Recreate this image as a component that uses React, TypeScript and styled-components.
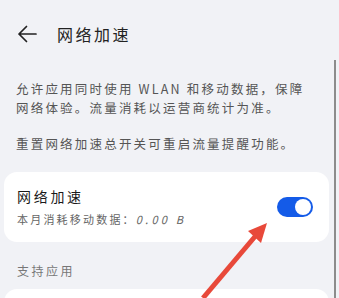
import React from "react";
import styled, { createGlobalStyle } from "styled-components";

const GlobalStyle = createGlobalStyle`
  html, body {
    margin: 0;
    padding: 0;
    background: #f1f2f6;
  }
  body {
    font-family: "Noto Sans CJK SC", "Noto Sans", sans-serif;
    color: #1f1f1f;
  }
`;

const SPage = styled.div`
  position: relative;
  width: 339px;
  height: 298px;
  overflow: hidden;
  background: #f1f2f6;
`;

const SHeader = styled.header`
  display: flex;
  align-items: center;
  height: 68px;
  padding-left: 17px;
  gap: 20px;
`;

const SBack = styled.svg`
  width: 20px;
  height: 18px;
  flex-shrink: 0;
`;

const STitle = styled.h1`
  margin: 0;
  font-size: 16px;
  font-weight: 400;
  letter-spacing: 2.5px;
  color: #222;
`;

const SDesc = styled.div`
  padding: 12px 0 0 16px;
  font-size: 12.5px;
  line-height: 18.5px;
  letter-spacing: 2.2px;
  color: #555;
  white-space: nowrap;
`;

const SPara = styled.p`
  margin: 0 0 18px;
`;

const SLine = styled.span`
  display: block;
`;

const SCard = styled.div<{ $height?: number }>`
  display: flex;
  align-items: center;
  justify-content: space-between;
  margin: 0 10px 0 4px;
  height: ${({ $height }) => $height ?? 70}px;
  padding: 0 16px 0 13px;
  background: #fff;
  border-radius: 13px;
`;

const SCardText = styled.div`
  display: flex;
  flex-direction: column;
  gap: 5px;
`;

const SCardTitle = styled.div`
  font-size: 14px;
  line-height: 20px;
  letter-spacing: 2.7px;
  color: #1a1a1a;
`;

const SCardSub = styled.div`
  font-size: 11px;
  line-height: 16px;
  letter-spacing: 2.2px;
  color: #666;
`;

const SNum = styled.span`
  letter-spacing: 3.2px;
  font-style: italic;
`;

const SToggle = styled.div<{ $on?: boolean }>`
  display: flex;
  justify-content: ${({ $on }) => ($on ? "flex-end" : "flex-start")};
  align-items: center;
  width: 36px;
  height: 20px;
  padding: 0 2px;
  box-sizing: border-box;
  border-radius: 10px;
  background: ${({ $on }) => ($on ? "#145be8" : "#ccc")};
`;

const SKnob = styled.div`
  width: 16px;
  height: 16px;
  border-radius: 50%;
  background: #fff;
`;

const SSection = styled.div`
  margin: 20px 0 9px;
  padding-left: 17px;
  font-size: 12px;
  line-height: 18px;
  letter-spacing: 2.5px;
  color: #777;
`;

const SScrollbar = styled.div`
  position: absolute;
  top: 60px;
  right: 3px;
  width: 2px;
  height: 238px;
  background: #8c8c8c;
`;

const SPointer = styled.svg`
  position: absolute;
  left: 190px;
  top: 215px;
  width: 85px;
  height: 83px;
  pointer-events: none;
`;

export default function App() {
  return (
    <SPage>
      <GlobalStyle />
      <SHeader>
        <SBack viewBox="0 0 20 18">
          <path
            d="M19 9H2M9.5 1.5L2 9l7.5 7.5"
            fill="none"
            stroke="#222"
            strokeWidth="1.7"
            strokeLinecap="round"
            strokeLinejoin="round"
          />
        </SBack>
        <STitle>网络加速</STitle>
      </SHeader>
      <SDesc>
        <SPara>
          <SLine>允许应用同时使用 WLAN 和移动数据，保障</SLine>
          <SLine>网络体验。流量消耗以运营商统计为准。</SLine>
        </SPara>
        <SPara>
          <SLine>重置网络加速总开关可重启流量提醒功能。</SLine>
        </SPara>
      </SDesc>
      <SCard>
        <SCardText>
          <SCardTitle>网络加速</SCardTitle>
          <SCardSub>
            本月消耗移动数据：<SNum>0.00 B</SNum>
          </SCardSub>
        </SCardText>
        <SToggle $on>
          <SKnob />
        </SToggle>
      </SCard>
      <SSection>支持应用</SSection>
      <SCard $height={60} />
      <SScrollbar />
      <SPointer viewBox="0 0 85 83">
        <line x1="13" y1="83" x2="68" y2="18" stroke="#e8493a" strokeWidth="5" />
        <polygon points="77,8 58,16 71,28" fill="#e8493a" />
      </SPointer>
    </SPage>
  );
}
